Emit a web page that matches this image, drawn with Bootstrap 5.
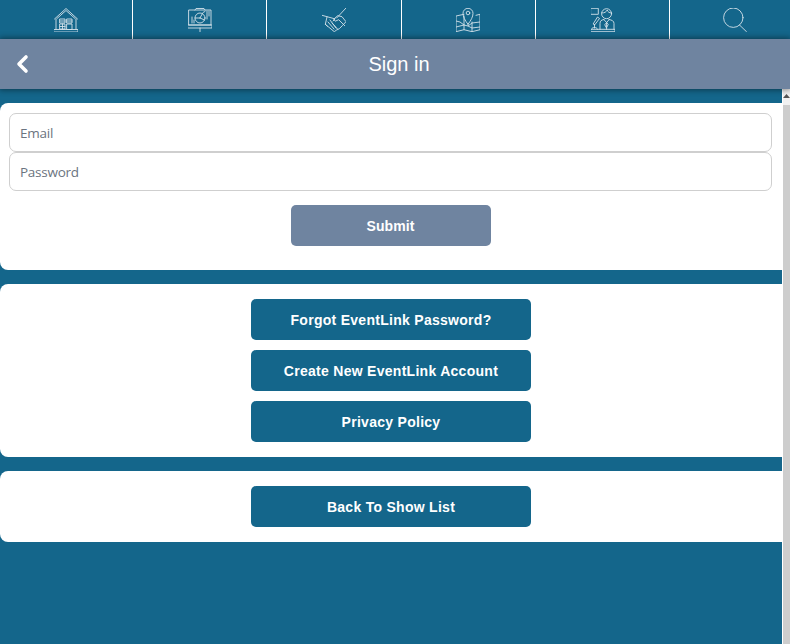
<!DOCTYPE html>
<html lang="en">
<head>
<meta charset="utf-8">
<title>Sign in</title>
<link href="https://cdn.jsdelivr.net/npm/bootstrap@5.3.0/dist/css/bootstrap.min.css" rel="stylesheet">
<style>
html,body{height:644px;overflow:hidden;margin:0}
body{background:#14668b;font-family:"Liberation Sans",Arial,sans-serif}
.top-strip{height:39px;background:#14668b;overflow:hidden}
.top-cell{flex:none;width:134.3px;border-right:1px solid #fff;height:39px}
.top-cell:first-child{width:133px}
.top-cell:last-child{border-right:0;width:130px}
.top-cell svg{width:24px;height:24px;fill:none;stroke:#d5e2ea;stroke-width:.9;stroke-linejoin:round;stroke-linecap:round}
.title-bar{height:50px;background:#6f84a0;box-shadow:0 0 6px 1px rgba(0,0,0,.45);position:relative;z-index:2;color:#fff;font-size:20px;padding-left:8px}
.back-mark{left:15px;top:15px;width:16px;height:20px;stroke:#fff;stroke-width:3.6;fill:none;stroke-linecap:round;stroke-linejoin:round}
.page-zone{height:555px}
.page-col{width:782px;padding-top:14px}
.rail{width:8px;background:#fff;padding-left:1px}
.rail-track{background:#cdcdcd;height:100%}
.rail-cap{height:16px;background:#f1f1f1;color:#555}
.sheet{background:#fff;border-radius:8px 0 0 8px;margin-bottom:14px}
.sheet-form{height:167px;padding:10px 10px 0 9px}
.sheet-links{height:173px;padding-top:15px}
.sheet-back{height:71px;padding-top:15px}
.field{height:39px;width:763px;border:1px solid #cfcfcf;border-radius:7px;padding:0 10px;font:13.5px "Open Sans",sans-serif;letter-spacing:-.25px;color:#333;display:block}
.field::placeholder{color:#6b7480;opacity:1}
.field:focus{outline:0}
.go-btn{width:200px;height:41px;background:#6f84a0;border:0;border-radius:5px;color:#fff;font:bold 14px "Liberation Sans",sans-serif;margin:14px 0 0 282px;display:block;padding:0 1px 0 0;letter-spacing:.1px}
.link-btn{width:280px;height:41px;background:#14668b;border:0;border-radius:5px;color:#fff;font:bold 14px "Liberation Sans",sans-serif;letter-spacing:.28px;padding:0;margin:0 0 10px 251px;display:block}
.link-btn:hover,.link-btn:active,.go-btn:hover{color:#fff}
</style>
</head>
<body>
<nav class="top-strip d-flex">
  <a class="top-cell d-flex align-items-center justify-content-center" href="#" aria-label="Home">
    <svg viewBox="0 0 24 24"><path d="M.5 11 12 .5 23.500 11M3 10.500 12 2.500l9 8M2 11v10.500M22 11v10.500M0 21.500h24V24H0z"/><path d="M6 11h5v4H6zM13 11h5v4h-5zM6 13h5M13 13h5M6 16h5v5H6zM6 18.500h5M8.500 16v5M13 16h5v5.500h-5z"/></svg>
  </a>
  <a class="top-cell d-flex align-items-center justify-content-center" href="#" aria-label="Schedule">
    <svg viewBox="0 0 24 24"><path d="M1 2h22v15H1zM0 17h24v3H0zM7 2l1-1.500h8l1 1.500M12 20v4"/><circle cx="12" cy="10" r="5"/><path d="M12 10l2.500-4.500M12 10l4.500 2M12 10H7M4 9v6M6 12v3M19 3v8M21 3v5M17 3.500l-2 1"/></svg>
  </a>
  <a class="top-cell d-flex align-items-center justify-content-center" href="#" aria-label="Partners">
    <svg viewBox="0 0 24 24"><path d="M0 7.300l12.300 3.400M24 0l-9.300 10M5 9l-1.700 7.300 9 7.400 2-1.500 3-1.500 3-3 3.700-4-4-5-4.300-1-4 3.500 1.500 2 3.500-1.500 6 6M3.300 16.300l2.200 2M6 14l6 7M8 12l6 8M10 15l5.500 6M13 11l-2 2"/></svg>
  </a>
  <a class="top-cell d-flex align-items-center justify-content-center" href="#" aria-label="Map">
    <svg viewBox="0 0 24 24"><path d="M8 6.300 0 8v15.700l8-2 8 2 8-2V6.300L20 7.300M8 8v13.700M16 14v9.700M0 13l4 1 4 3 4 1 4-3 8-1M0 19l8-2M12 18l4 2 8-1"/><path d="M12 16.300c-3-4-5-7.500-5-11a5 5 0 0 1 10 0c0 3.500-2 7-5 11z"/><circle cx="12" cy="5" r="1.800"/></svg>
  </a>
  <a class="top-cell d-flex align-items-center justify-content-center" href="#" aria-label="Speakers">
    <svg viewBox="0 0 24 24"><path d="M0 .3h7.300v6H0zM0 21.300h24v2.400H0z"/><circle cx="15.600" cy="5.700" r="5"/><path d="M10.700 5c3 0 4.500-1 5.500-3 .7 2 2 3 4.400 3M13 11.500c-3 .5-4 1.500-4 4v5.800M18 11.500c3 .5 5 1.500 5 4v5.800M12.800 11.500l2.800 3 2.600-3M15.600 14.500v6.800M14 16.500l1.600-2 1.600 2-1.600 3zM2.300 15.700 6.500 9l2 1.500-4.500 6zM3.500 16.500V20M.5 21.300c.5-1.500 1.500-1.800 3-1.800s2.500.3 3 1.800"/></svg>
  </a>
  <a class="top-cell d-flex align-items-center justify-content-center" href="#" aria-label="Search">
    <svg viewBox="0 0 24 24"><circle cx="10.300" cy="9.700" r="9.700"/><path d="M16.500 17 23.500 23.700"/></svg>
  </a>
</nav>
<header class="title-bar d-flex align-items-center justify-content-center">
  <svg class="back-mark position-absolute" viewBox="0 0 16 20"><path d="M11 3 4 10l7 7"/></svg>
  <span>Sign in</span>
</header>
<div class="page-zone d-flex">
  <main class="page-col">
    <section class="sheet sheet-form">
      <form>
        <input class="field" type="text" placeholder="Email">
        <input class="field" type="password" placeholder="Password">
        <button class="go-btn btn" type="button">Submit</button>
      </form>
    </section>
    <section class="sheet sheet-links">
      <button class="link-btn btn" type="button">Forgot EventLink Password?</button>
      <button class="link-btn btn" type="button">Create New EventLink Account</button>
      <button class="link-btn btn" type="button">Privacy Policy</button>
    </section>
    <section class="sheet sheet-back">
      <button class="link-btn btn" type="button">Back To Show List</button>
    </section>
  </main>
  <div class="rail"><div class="rail-track"><div class="rail-cap d-flex justify-content-center pt-1"><svg width="7" height="5" viewBox="0 0 7 5"><path d="M0 5 3.500 1 7 5z" fill="#555"/></svg></div></div></div>
</div>
</body>
</html>
